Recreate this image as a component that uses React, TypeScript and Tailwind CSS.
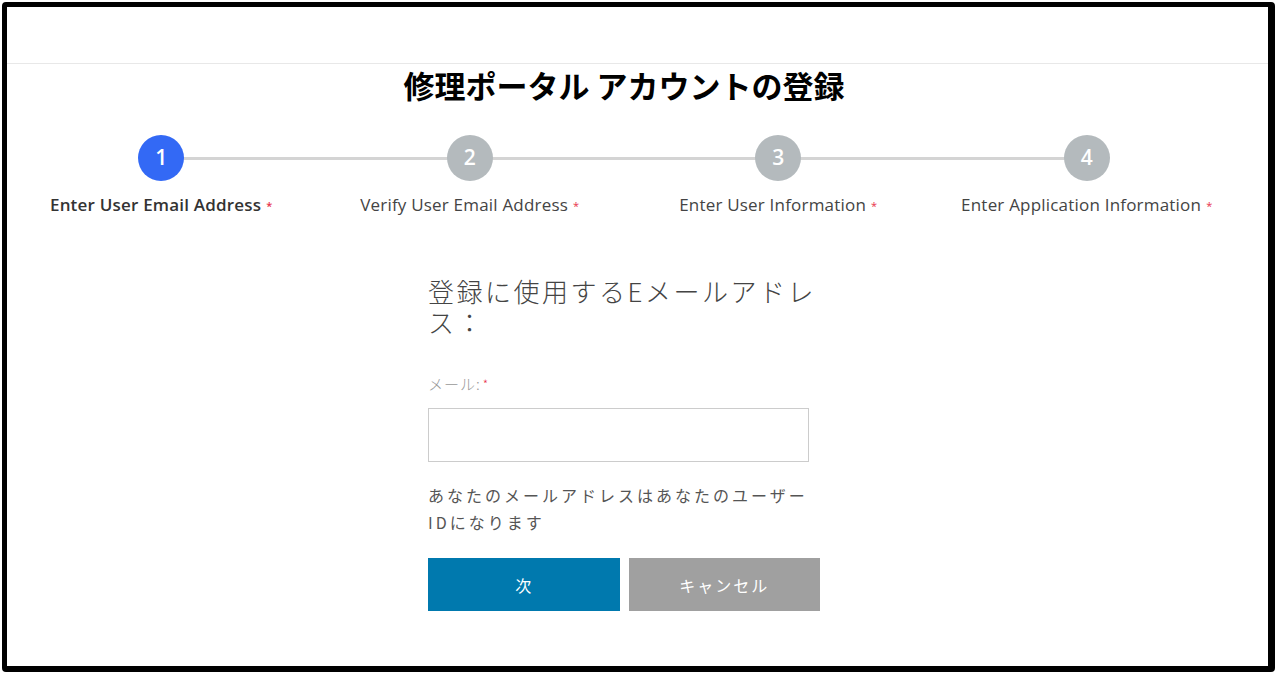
import React from "react";

const steps = [
  { n: 1, label: "Enter User Email Address", active: true },
  { n: 2, label: "Verify User Email Address", active: false },
  { n: 3, label: "Enter User Information", active: false },
  { n: 4, label: "Enter Application Information", active: false },
];

export default function App() {
  return (
    <div className="w-[1276px] h-[674px] bg-white overflow-hidden pt-[2px] pl-[2px]">
      <div className="w-[1273px] h-[670px] border-l-[5px] border-t-[5px] border-r-[7px] border-b-[6px] border-black rounded-[4px] bg-white overflow-hidden">
        <div className="h-[57px] border-b border-[#e8e8e8]" />
        <div className="w-[1234px] flex flex-col items-center">
          <h1
            className="mt-[3px] text-[31px] leading-[36px] font-bold text-black"
            style={{ fontFamily: '"Noto Sans CJK JP", sans-serif' }}
          >
            修理ポータル アカウントの登録
          </h1>
          <div className="relative w-full mt-[32px] grid grid-cols-4">
            <div className="absolute left-[154px] right-[154px] top-[22px] h-[3px] bg-[#d4d4d4]" />
            {steps.map((s) => (
              <div key={s.n} className="relative flex flex-col items-center">
                <div
                  className={`w-[46px] h-[46px] rounded-full flex items-center justify-center text-white text-[21px] font-semibold ${
                    s.active ? "bg-[#3369f5]" : "bg-[#b4babd]"
                  }`}
                  style={{ fontFamily: '"Open Sans", sans-serif' }}
                >
                  {s.n}
                </div>
                <div
                  className={`mt-[12px] text-[17px] leading-[23px] tracking-[0.2px] whitespace-nowrap ${
                    s.active ? "font-semibold text-[#333]" : "text-[#444]"
                  }`}
                  style={{ fontFamily: '"Open Sans", sans-serif' }}
                >
                  {s.label}
                  <span className="text-[#e8314a] text-[11px] align-top ml-[5px] relative top-[1px]">*</span>
                </div>
              </div>
            ))}
          </div>
          <div
            className="w-[392px] mt-[59px] text-[#555]"
            style={{ fontFamily: '"Noto Sans CJK JP", sans-serif' }}
          >
            <div className="text-[26px] leading-[31px] font-light tracking-[2.5px] text-[#444]">
              登録に使用するEメールアドレス：
            </div>
            <div className="mt-[37px] text-[15px] leading-[20px] text-[#999] font-light tracking-[1px]">
              メール:<span className="text-[#e8314a] text-[12px] align-top ml-[2px]">*</span>
            </div>
            <input
              className="mt-[14px] block w-[381px] h-[54px] border border-[#cccccc] outline-none"
              type="text"
            />
            <div className="mt-[20px] text-[16px] leading-[27px] tracking-[3px] text-[#555]">
              あなたのメールアドレスはあなたのユーザーIDになります
            </div>
            <div className="mt-[22px] flex gap-[9px]">
              <button className="w-[192px] h-[53px] bg-[#0079ae] text-white text-[16px] tracking-[1px]">
                次
              </button>
              <button className="w-[192px] h-[53px] bg-[#a0a0a0] text-white text-[16px] tracking-[2px]">
                キャンセル
              </button>
            </div>
          </div>
        </div>
      </div>
    </div>
  );
}
